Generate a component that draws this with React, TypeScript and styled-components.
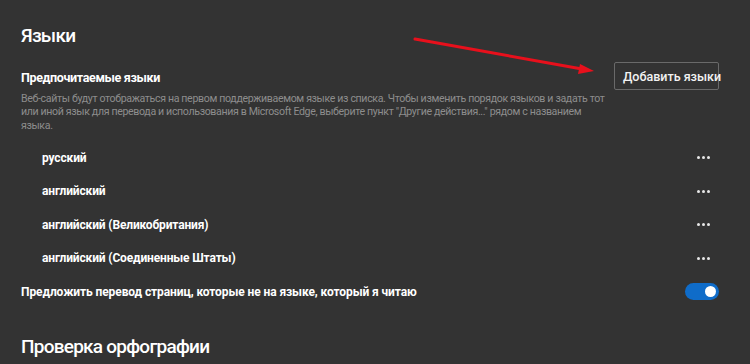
import React from "react";
import styled, { createGlobalStyle } from "styled-components";

const Global = createGlobalStyle`
  html, body { margin: 0; padding: 0; background: #333333; }
  body { font-family: Roboto, "Noto Sans", sans-serif; color: #ffffff; }
  * { box-sizing: border-box; }
`;

const Page = styled.div`
  position: relative;
  width: 750px;
  height: 364px;
  overflow: hidden;
  background: #333333;
  padding: 22px 31px 0 21px;
`;

const SectionTitle = styled.h2<{ $top?: number }>`
  margin: ${(p) => p.$top ?? 0}px 0 0 0;
  font-size: 19px;
  font-weight: 500;
  letter-spacing: -0.75px;
  line-height: 28px;
  color: #ffffff;
`;

const SettingBlock = styled.div`
  display: flex;
  align-items: flex-start;
  justify-content: space-between;
  margin-top: 12px;
`;

const SettingText = styled.div`
  width: 586px;
  padding-top: 6px;
`;

const SettingTitle = styled.div`
  font-size: 12.5px;
  font-weight: 700;
  letter-spacing: -0.35px;
  line-height: 20px;
  color: #ffffff;
`;

const Description = styled.div`
  margin-top: 3.5px;
  font-size: 10.6px;
  letter-spacing: -0.35px;
  line-height: 13.6px;
  color: #8d8d8d;
`;

const OutlineButton = styled.button`
  height: 28px;
  padding: 0 8px;
  background: #333333;
  border: 1px solid #6a6a6a;
  border-radius: 2px;
  color: #f2f2f2;
  font-family: inherit;
  font-size: 12.5px;
  font-weight: 500;
  white-space: nowrap;
  width: 105px;
`;

const LangList = styled.div`
  margin-top: 8.5px;
  display: flex;
  flex-direction: column;
`;

const LangRow = styled.div`
  height: 33.5px;
  display: flex;
  align-items: center;
  justify-content: space-between;
  padding: 0 8px 0 21px;
`;

const LangName = styled.span`
  font-size: 12px;
  font-weight: 700;
  letter-spacing: -0.15px;
  color: #ffffff;
`;

const Dots = styled.span`
  display: flex;
  gap: 2px;
  width: 14px;
`;

const Dot = styled.span`
  width: 3px;
  height: 3px;
  border-radius: 50%;
  background: #e8e8e8;
`;

const ToggleRow = styled.div`
  height: 34px;
  display: flex;
  align-items: center;
  justify-content: space-between;
`;

const ToggleLabel = styled.span`
  font-size: 12px;
  font-weight: 700;
  letter-spacing: -0.1px;
  color: #ffffff;
`;

const Toggle = styled.span<{ $on: boolean }>`
  width: 34px;
  height: 17px;
  border-radius: 9px;
  background: ${(p) => (p.$on ? "#0f6cc9" : "#555")};
  display: flex;
  align-items: center;
  justify-content: ${(p) => (p.$on ? "flex-end" : "flex-start")};
  padding: 0 3px;
`;

const Knob = styled.span`
  width: 11px;
  height: 11px;
  border-radius: 50%;
  background: #ffffff;
`;

const ArrowOverlay = styled.svg`
  position: absolute;
  left: 0;
  top: 0;
  pointer-events: none;
`;

const langs = [
  "русский",
  "английский",
  "английский (Великобритания)",
  "английский (Соединенные Штаты)",
];

export default function App() {
  return (
    <>
      <Global />
      <Page>
        <SectionTitle>Языки</SectionTitle>
        <SettingBlock>
          <SettingText>
            <SettingTitle>Предпочитаемые языки</SettingTitle>
            <Description>
              Веб-сайты будут отображаться на первом поддерживаемом языке из
              списка. Чтобы изменить порядок языков и задать тот или иной язык
              для перевода и использования в Microsoft Edge, выберите пункт
              "Другие действия..." рядом с названием языка.
            </Description>
          </SettingText>
          <OutlineButton>Добавить языки</OutlineButton>
        </SettingBlock>
        <LangList>
          {langs.map((l) => (
            <LangRow key={l}>
              <LangName>{l}</LangName>
              <Dots>
                <Dot />
                <Dot />
                <Dot />
              </Dots>
            </LangRow>
          ))}
        </LangList>
        <ToggleRow>
          <ToggleLabel>
            Предложить перевод страниц, которые не на языке, который я читаю
          </ToggleLabel>
          <Toggle $on>
            <Knob />
          </Toggle>
        </ToggleRow>
        <SectionTitle $top={24}>Проверка орфографии</SectionTitle>
        <ArrowOverlay width="750" height="364" viewBox="0 0 750 364">
          <line x1="415" y1="39" x2="582" y2="69" stroke="#e8101c" strokeWidth="3" strokeLinecap="round" />
          <polygon points="594,71 580,64 578,74" fill="#e8101c" />
        </ArrowOverlay>
      </Page>
    </>
  );
}
